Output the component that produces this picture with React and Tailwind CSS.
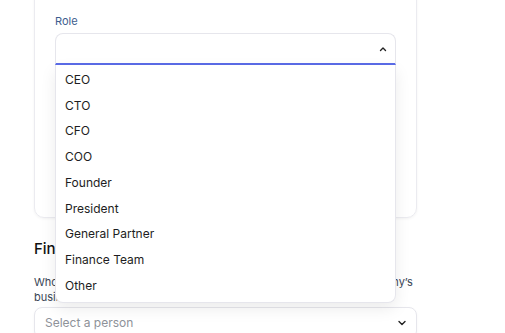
import React from 'react';

const roles = ["CEO", "CTO", "CFO", "COO", "Founder", "President", "General Partner", "Finance Team", "Other"];

function ChevronUp() {
    return (
        <svg width="10" height="10" viewBox="0 0 10 10" fill="none">
            <path d="M2.5 6.5 L5 4 L7.5 6.5" stroke="#222" strokeWidth="1.4" strokeLinecap="round" strokeLinejoin="round" />
        </svg>
    );
}

function ChevronDown() {
    return (
        <svg width="10" height="10" viewBox="0 0 10 10" fill="none">
            <path d="M2 3.5 L5 6.5 L8 3.5" stroke="#222" strokeWidth="1.4" strokeLinecap="round" strokeLinejoin="round" />
        </svg>
    );
}

function App() {
    return (
        <div className="w-[505px] h-[333px] overflow-hidden bg-white relative" style={{ fontFamily: "Inter, 'Noto Sans', sans-serif" }}>
            <div className="ml-[34px] w-[383px] mt-[-19px]">
                <div className="rounded-[10px] border border-[#ebebf0] shadow-[0_1px_3px_rgba(0,0,0,0.05)] pt-[32px] px-[20px] h-[237px]">
                    <div className="text-[11px] leading-[14px] text-[#3d5d8e]">Role</div>
                    <div className="relative mt-[5px] z-10">
                        <div className="h-[32px] border border-[#e6e6ec] border-b-[#5b6ce8] border-b-[2px] rounded-t-[8px] flex items-center justify-end pr-[7px] bg-white">
                            <ChevronUp />
                        </div>
                        <div className="absolute top-full left-0 right-0 bg-white rounded-b-[8px] border border-t-0 border-[#e6e6ec] shadow-[0_6px_16px_rgba(0,0,0,0.08)] pt-[2px] pb-[3px]">
                            {roles.map((role) => (
                                <div key={role} className="h-[25.75px] flex items-center pl-[9px] text-[12px] text-[#1d1d22]">
                                    {role}
                                </div>
                            ))}
                        </div>
                    </div>
                </div>

                <div className="mt-[21px] text-[15px] leading-[20px] text-[#111] font-medium">Finance Contact</div>
                <div className="mt-[16px] text-[11px] leading-[15px] text-[#3a4656] whitespace-nowrap">
                    Who should we contact regarding financial questions for your company’s
                    <br />
                    business accounts?
                </div>
                <div className="mt-[2px] h-[32px] border border-[#e6e6ec] rounded-[8px] flex items-center justify-between pl-[10px] pr-[9px] shadow-[0_1px_3px_rgba(0,0,0,0.04)]">
                    <span className="text-[12px] text-[#8e9299]">Select a person</span>
                    <ChevronDown />
                </div>
            </div>
        </div>
    );
}

export default App;
